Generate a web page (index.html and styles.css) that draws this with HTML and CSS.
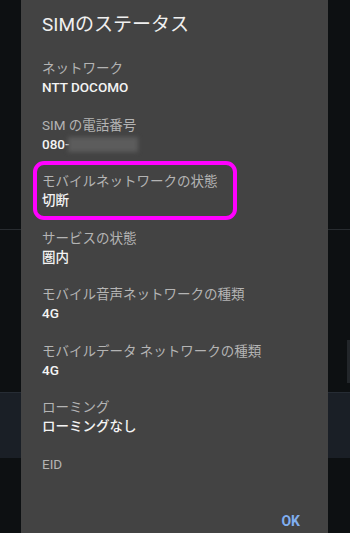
FILE: index.html
```html
<!DOCTYPE html>
<html lang="ja">

<head>
    <meta charset="UTF-8">
    <meta name="viewport" content="width=device-width, initial-scale=1.0">
    <title>SIMのステータス</title>
    <link rel="stylesheet" href="styles.css">
</head>

<body>
    <div class="backdrop">
        <div class="block-top"></div>
        <div class="block-mid"></div>
        <div class="band"></div>
        <div class="scroll-thumb"></div>
    </div>

    <div class="dialog">
        <h2 class="title">SIMのステータス</h2>
        <div class="list">
            <div class="item">
                <div class="label">ネットワーク</div>
                <div class="value">NTT DOCOMO</div>
            </div>
            <div class="item">
                <div class="label">SIM の電話番号</div>
                <div class="value">080-<span class="masked"></span></div>
            </div>
            <div class="item marked">
                <div class="label">モバイルネットワークの状態</div>
                <div class="value">切断</div>
                <div class="highlight"></div>
            </div>
            <div class="item">
                <div class="label">サービスの状態</div>
                <div class="value">圏内</div>
            </div>
            <div class="item">
                <div class="label">モバイル音声ネットワークの種類</div>
                <div class="value">4G</div>
            </div>
            <div class="item">
                <div class="label">モバイルデータ ネットワークの種類</div>
                <div class="value">4G</div>
            </div>
            <div class="item">
                <div class="label">ローミング</div>
                <div class="value">ローミングなし</div>
            </div>
            <div class="item">
                <div class="label">EID</div>
                <div class="value"></div>
            </div>
        </div>
        <div class="footer">
            <button class="ok">OK</button>
        </div>
    </div>
</body>
</html>
```

FILE: styles.css
```css
body {
    margin: 0;
    width: 350px;
    height: 533px;
    overflow: hidden;
    position: relative;
    font-family: Roboto, "Noto Sans CJK JP", sans-serif;
    background-color: #0d1012;
}

/* page behind the dialog */
.backdrop {
    height: 533px;
}

.block-top {
    height: 229px;
    border-bottom: 1px solid #282c30;
}

.block-mid {
    height: 162px;
}

.band {
    height: 65px;
    background-color: #1a1f26;
    border-top: 1px solid #262c34;
}

.scroll-thumb {
    position: absolute;
    right: 0;
    top: 340px;
    width: 3px;
    height: 43px;
    background-color: #22262a;
}

/* dialog */
.dialog {
    position: absolute;
    top: 0;
    left: 21px;
    width: 307px;
    height: 533px;
    background-color: #434343;
    display: flex;
    flex-direction: column;
}

.title {
    margin: 0;
    padding: 13px 21px 0;
    font-size: 19px;
    line-height: 24px;
    font-weight: 400;
    color: #f0f0f0;
}

.list {
    flex: 1;
    min-height: 0;
    overflow: hidden;
    padding: 22px 21px 0;
}

.item {
    position: relative;
    padding-bottom: 18.5px;
}

.label {
    font-size: 13.5px;
    line-height: 19px;
    height: 19px;
    color: #b4b4b4;
}

.value {
    font-size: 13.5px;
    line-height: 19px;
    height: 19px;
    font-weight: 500;
    color: #f4f4f4;
}

.masked {
    display: inline-block;
    width: 70px;
    height: 15px;
    margin-left: -2px;
    vertical-align: -3px;
    background-color: #5c5c5c;
    filter: blur(2px);
}

.highlight {
    position: absolute;
    left: -9px;
    top: -11px;
    width: 196px;
    height: 51px;
    border: 4px solid #ff00ff;
    border-radius: 11px;
}

.footer {
    display: flex;
    justify-content: flex-end;
    padding: 0 28px 2px 0;
}

.ok {
    padding: 0;
    border: none;
    background: none;
    font-family: Roboto, sans-serif;
    font-size: 14px;
    line-height: 20px;
    font-weight: 700;
    color: #80aef0;
}
```
